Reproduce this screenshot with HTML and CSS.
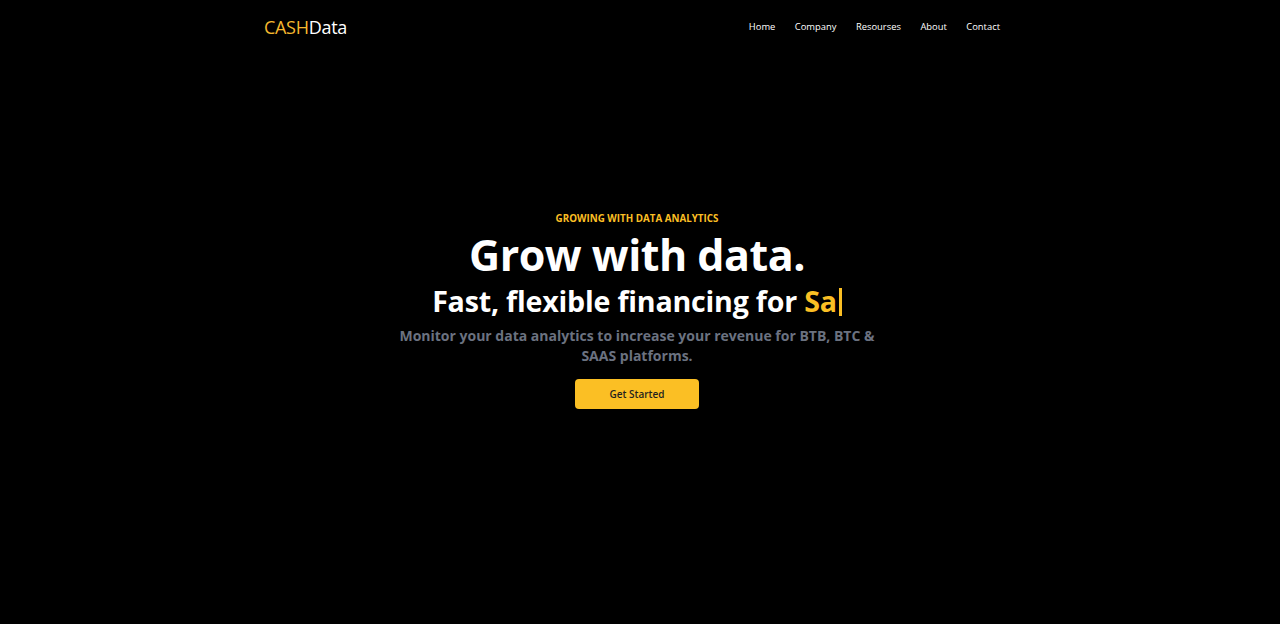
FILE: index.html
```html
<!DOCTYPE html>
<html lang="en">
<head>
<meta charset="utf-8">
<title>CASHData</title>
<link rel="stylesheet" href="styles.css">
</head>
<body>
<header class="topbar">
  <div class="logo"><span class="logo-accent">CASH</span>Data</div>
  <nav class="nav">
    <a href="#">Home</a>
    <a href="#">Company</a>
    <a href="#">Resourses</a>
    <a href="#">About</a>
    <a href="#">Contact</a>
  </nav>
</header>
<main class="hero">
  <p class="eyebrow">GROWING WITH DATA ANALYTICS</p>
  <h1 class="title">Grow with data.</h1>
  <h2 class="subtitle">Fast, flexible financing for <span class="typed">Sa</span><span class="caret"></span></h2>
  <p class="lead">Monitor your data analytics to increase your revenue for BTB, BTC &amp; SAAS platforms.</p>
  <button class="cta">Get Started</button>
</main>
</body>
</html>
```
FILE: styles.css
```css
* { box-sizing: border-box; }
html, body {
  margin: 0;
  background: #000;
  color: #fff;
  font-family: "Open Sans", "Noto Sans", sans-serif;
}
.topbar {
  width: 752px;
  margin: 0 auto;
  height: 53px;
  padding-right: 16px;
  display: flex;
  align-items: center;
  justify-content: space-between;
}
.logo {
  font-size: 18px;
  color: #fff;
  letter-spacing: -0.3px;
}
.logo-accent { color: #f5b82e; }
.nav {
  display: flex;
  gap: 19.5px;
}
.nav a {
  color: #fff;
  text-decoration: none;
  font-size: 9.4px;
}
.hero {
  display: flex;
  flex-direction: column;
  align-items: center;
  text-align: center;
  padding-top: 159px;
  padding-right: 6px;
}
.eyebrow {
  margin: 0;
  color: #fbbf24;
  font-size: 9.8px;
  font-weight: 700;
  line-height: 14px;
}
.title {
  margin: 3px 0 0;
  font-size: 43px;
  font-weight: 700;
  line-height: 52px;
  letter-spacing: -0.5px;
}
.subtitle {
  margin: 1px 0 0;
  display: flex;
  align-items: center;
  font-size: 28.6px;
  font-weight: 700;
  line-height: 38px;
  letter-spacing: -0.2px;
  white-space: pre;
}
.typed { color: #fbbf24; }
.caret {
  display: inline-block;
  width: 3px;
  height: 28px;
  margin-left: 2px;
  margin-top: 2px;
  background: #fbbf24;
}
.lead {
  margin: 6px 0 0;
  width: 484px;
  color: #6b7280;
  font-size: 14px;
  font-weight: 700;
  line-height: 20px;
}
.cta {
  margin-top: 13px;
  width: 124px;
  height: 30px;
  border: none;
  border-radius: 4px;
  background: #fbbf24;
  color: #1f1f1f;
  font-family: inherit;
  font-size: 10px;
  font-weight: 600;
}
```
